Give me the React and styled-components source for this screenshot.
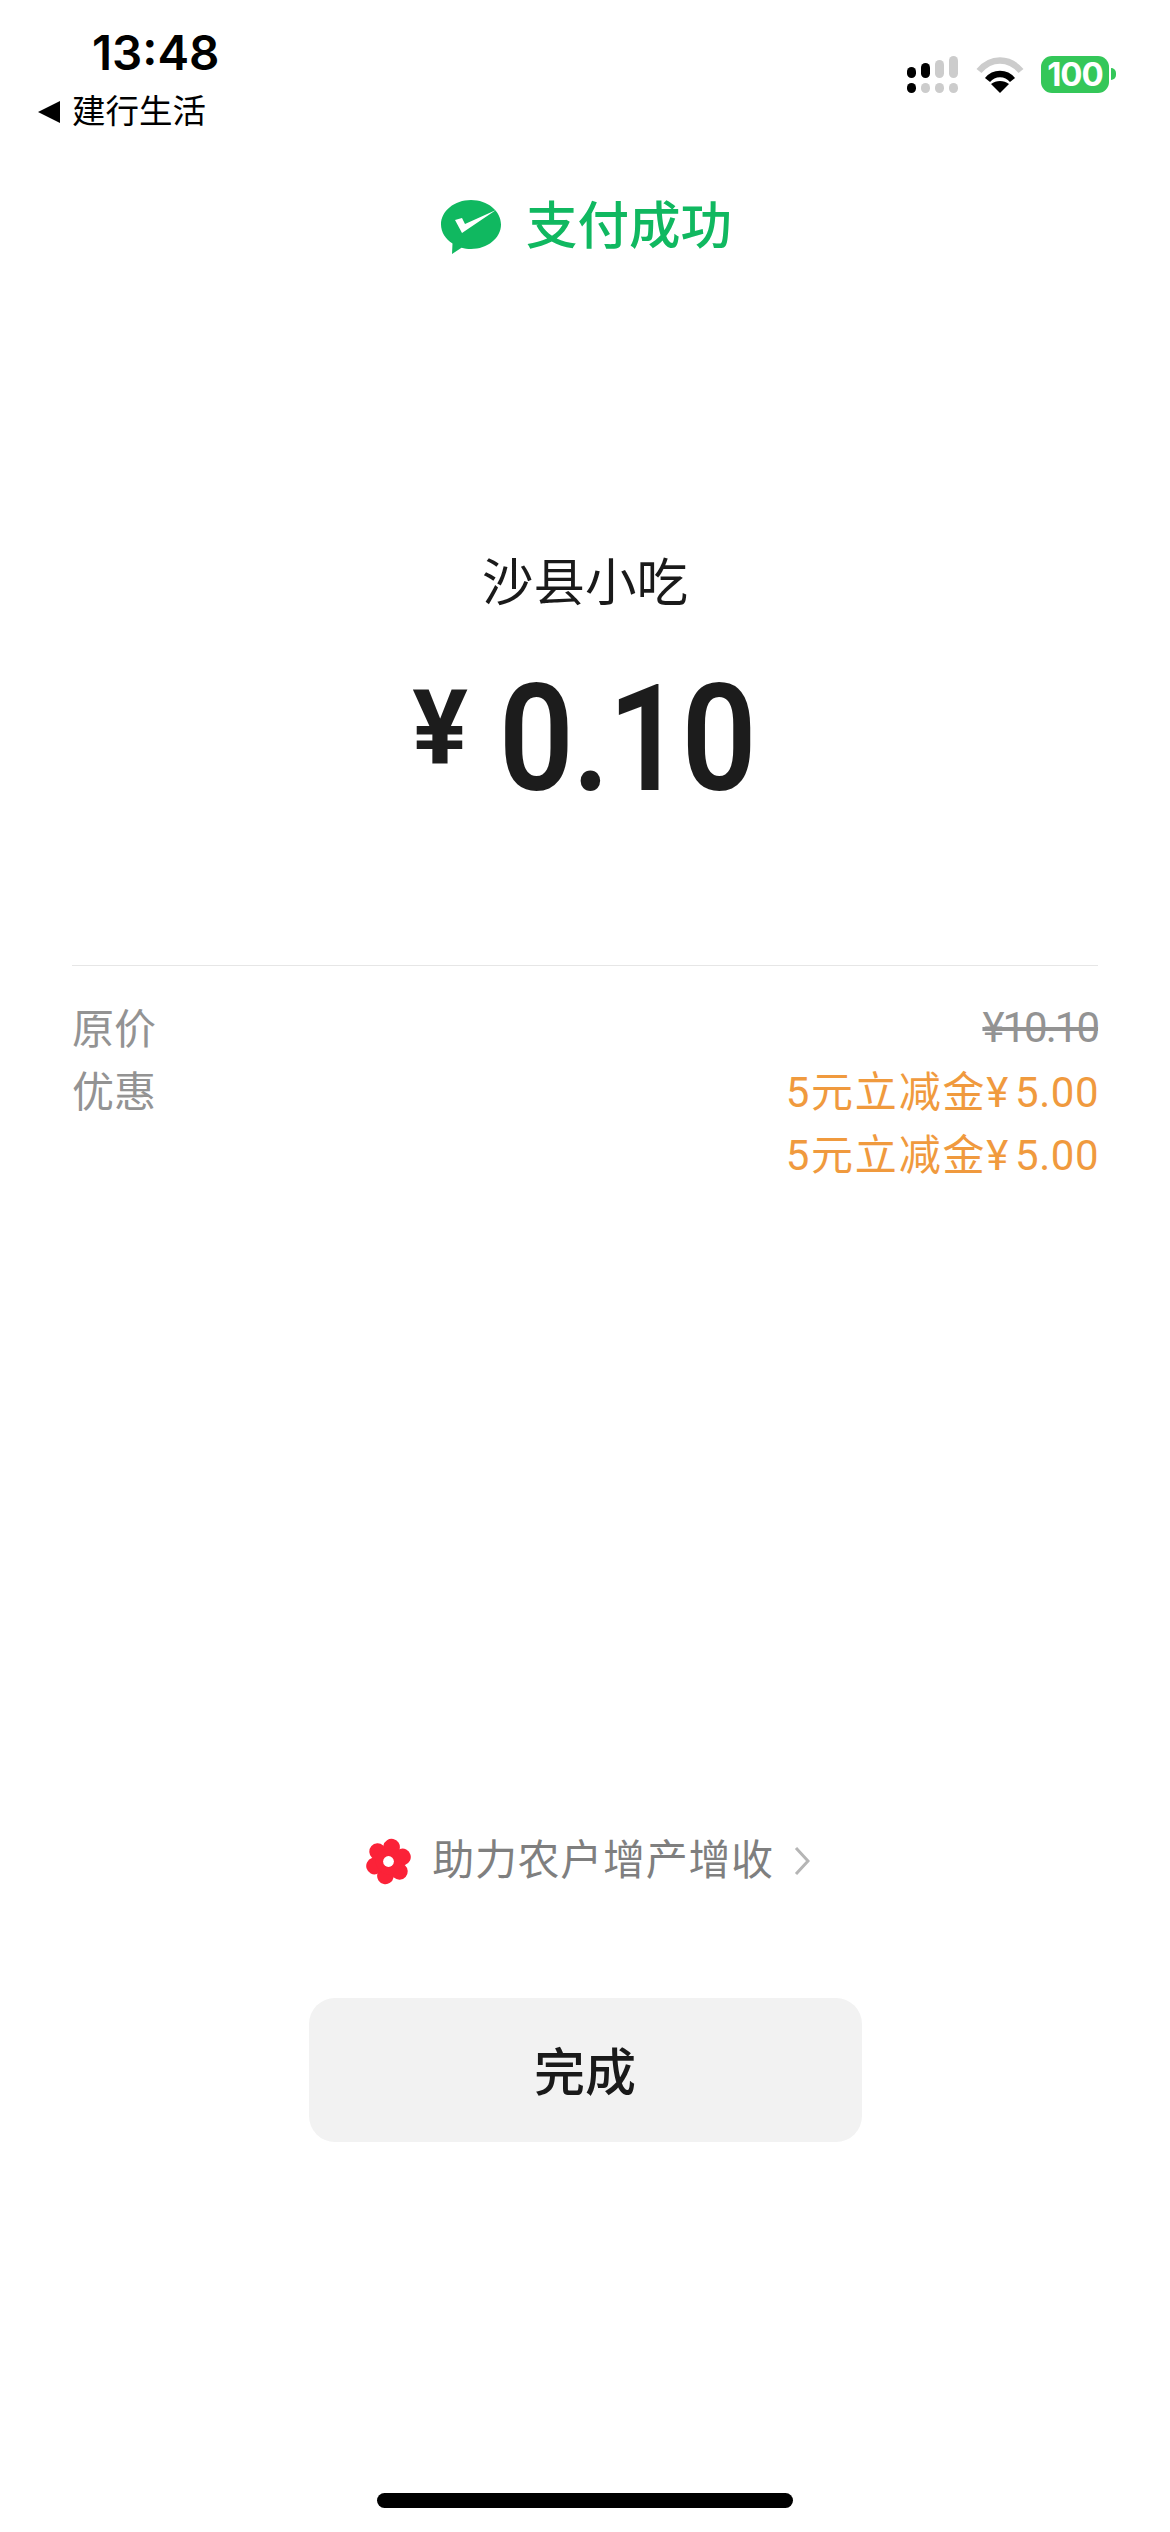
import React from "react"
import styled, { createGlobalStyle } from "styled-components"

const GlobalStyle = createGlobalStyle`
  html, body {
    margin: 0;
    padding: 0;
    background: #fff;
  }
`

const cjk = `Roboto, "Noto Sans CJK SC", sans-serif`

const Page = styled.div`
  width: 1170px;
  height: 2532px;
  display: flex;
  flex-direction: column;
  align-items: center;
  background: #fff;
  font-family: ${cjk};
  overflow: hidden;
`

const StatusBar = styled.div`
  width: 100%;
  height: 132px;
  box-sizing: border-box;
  padding: 25px 54px 0 38px;
  display: flex;
  justify-content: space-between;
  align-items: flex-start;
`

const StatusLeft = styled.div`
  display: flex;
  flex-direction: column;
  gap: 11px;
`

const Time = styled.div`
  margin-left: 54px;
  font-family: Inter, sans-serif;
  font-size: 47.5px;
  line-height: 56px;
  font-weight: 600;
  color: #000;
`

const Carrier = styled.div`
  display: flex;
  align-items: center;
  gap: 12px;
  font-size: 33.500px;
  line-height: 40px;
  color: #000;
`

const BackArrow = styled.span`
  width: 0;
  height: 0;
  border-style: solid;
  border-width: 11px 22px 11px 0;
  border-color: transparent #000 transparent transparent;
`

const StatusRight = styled.div`
  display: flex;
  align-items: center;
  gap: 17px;
  margin-top: 30px;
`

const Battery = styled.div`
  display: flex;
  align-items: center;
  gap: 2px;
`

const BatteryBody = styled.div`
  width: 68px;
  height: 37px;
  border-radius: 11px;
  background: #34c759;
  color: #fff;
  font-family: Inter, sans-serif;
  font-size: 33px;
  font-weight: 700;
  line-height: 37px;
  text-align: center;
  letter-spacing: -1px;
`

const BatteryNub = styled.div`
  width: 5px;
  height: 12px;
  border-radius: 0 6px 6px 0;
  background: #34c759;
`

const TitleRow = styled.div`
  margin: 65px 0 0 3px;
  display: flex;
  align-items: center;
  gap: 25px;
  height: 60px;
`

const Title = styled.div`
  font-size: 51.500px;
  line-height: 60px;
  font-weight: 500;
  color: #10b860;
`

const Merchant = styled.div`
  margin-top: 297px;
  font-size: 51.500px;
  line-height: 60px;
  font-weight: 400;
  color: #1a1a1a;
`

const Amount = styled.div`
  margin: 46px 0 0 13px;
  height: 160px;
  display: flex;
  align-items: center;
  gap: 15px;
  color: #1c1c1c;
`

const Yen = styled.span`
  font-size: 104px;
  line-height: 160px;
  font-weight: 700;
  margin-top: -24px;
`

const Digits = styled.span`
  font-size: 148px;
  line-height: 160px;
  font-weight: 600;
  letter-spacing: -2px;
  transform: scaleX(0.89);
`

const Divider = styled.div`
  margin-top: 145px;
  width: 1026px;
  height: 1px;
  background: #e6e6e6;
`

const Details = styled.div`
  width: 1026px;
  margin-top: 28px;
  display: grid;
  grid-template-columns: auto 1fr;
  grid-auto-rows: 63px;
  align-items: center;
  font-size: 42px;
`

const Label = styled.div`
  color: #939393;
  grid-column: 1;
`

const Value = styled.div`
  grid-column: 2;
  text-align: right;
  letter-spacing: ${props => (props.$struck ? "-2px" : "1.8px")};
  margin-right: ${props => (props.$struck ? "0" : "-1px")};
  margin-top: ${props => (props.$struck ? "3px" : "-1px")};
  color: ${props => (props.$struck ? "#939393" : "#f09a3e")};
  text-decoration: ${props => (props.$struck ? "line-through" : "none")};
`

const Sign = styled.span`
  margin-right: 5px;
`

const Num = styled.span`
  letter-spacing: 0.5px;
`

const LinkRow = styled.div`
  margin: 648px 0 0 5px;
  height: 60px;
  display: flex;
  align-items: center;
  gap: 20px;
`

const LinkText = styled.div`
  font-size: 42px;
  line-height: 60px;
  letter-spacing: 0.7px;
  color: #7f7f7f;
`

const DoneButton = styled.button`
  margin-top: 107px;
  width: 553px;
  height: 144px;
  border: none;
  border-radius: 26px;
  background: #f2f2f2;
  color: #1a1a1a;
  font-family: ${cjk};
  font-size: 51px;
  font-weight: 500;
  padding: 0 0 2px;
`

const HomeIndicator = styled.div`
  margin-top: 351px;
  width: 416px;
  height: 15px;
  border-radius: 8px;
  background: #000;
`

const SignalIcon = () => (
  <svg width="52" height="38" viewBox="0 0 52 38">
    <rect x="0" y="12" width="9" height="11" rx="4.5" fill="#000" />
    <rect x="14" y="8" width="9" height="15" rx="4.5" fill="#000" />
    <rect x="28" y="5" width="9" height="18" rx="4.5" fill="#ccc" />
    <rect x="42" y="1" width="9" height="22" rx="4.5" fill="#ccc" />
    <rect x="0" y="28" width="9" height="10" rx="4.5" fill="#000" />
    <rect x="14" y="28" width="9" height="10" rx="4.5" fill="#ccc" />
    <rect x="28" y="28" width="9" height="10" rx="4.5" fill="#ccc" />
    <rect x="42" y="28" width="9" height="10" rx="4.5" fill="#ccc" />
  </svg>
)

const WifiIcon = () => (
  <svg width="48" height="37" viewBox="0 0 48 37">
    <path d="M3 15 C15 1 33 1 45 15" fill="none" stroke="#ccc" strokeWidth="6.5" />
    <path d="M11.5 24 C18 16 30 16 36.5 24" fill="none" stroke="#000" strokeWidth="6.5" />
    <path d="M24 37 L15 28 C20 24 28 24 33 28 Z" fill="#000" />
  </svg>
)

const PayIcon = () => (
  <svg width="60" height="54" viewBox="0 0 60 54">
    <path
      d="M30 0 C46.500 0 60 11 60 24.500 C60 38 46.500 49 30 49 C26.500 49 23.500 48.500 20.500 47.700 L11 54 L11.500 43.500 C4.500 39 0 32.200 0 24.500 C0 11 13.500 0 30 0 Z"
      fill="#10b860"
    />
    <path d="M14 20 L21 18 L24 24 L55 10 L21 33 Z" fill="#fff" />
  </svg>
)

const FlowerIcon = () => (
  <svg width="47" height="47" viewBox="-24 -24 48 48">
    {[0, 60, 120, 180, 240, 300].map(angle => (
      <circle key={angle} cx="0" cy="-15" r="8.500" fill="#fb2238" transform={`rotate(${angle + 12})`} />
    ))}
    <circle r="13" fill="#fb2238" />
    <circle r="5.500" fill="#fff" />
  </svg>
)

const ChevronIcon = () => (
  <svg width="16" height="30" viewBox="0 0 16 30">
    <path d="M2 2 L14 15 L2 28" fill="none" stroke="#b5b5b5" strokeWidth="3" />
  </svg>
)

export default function App() {
  return (
    <Page>
      <GlobalStyle />
      <StatusBar>
        <StatusLeft>
          <Time>13:48</Time>
          <Carrier>
            <BackArrow />
            建行生活
          </Carrier>
        </StatusLeft>
        <StatusRight>
          <SignalIcon />
          <WifiIcon />
          <Battery>
            <BatteryBody>100</BatteryBody>
            <BatteryNub />
          </Battery>
        </StatusRight>
      </StatusBar>
      <TitleRow>
        <PayIcon />
        <Title>支付成功</Title>
      </TitleRow>
      <Merchant>沙县小吃</Merchant>
      <Amount>
        <Yen>¥</Yen>
        <Digits>0.10</Digits>
      </Amount>
      <Divider />
      <Details>
        <Label>原价</Label>
        <Value $struck>¥10.10</Value>
        <Label>优惠</Label>
        <Value>5元立减金<Sign>¥</Sign><Num>5.00</Num></Value>
        <Value>5元立减金<Sign>¥</Sign><Num>5.00</Num></Value>
      </Details>
      <LinkRow>
        <FlowerIcon />
        <LinkText>助力农户增产增收</LinkText>
        <ChevronIcon />
      </LinkRow>
      <DoneButton>完成</DoneButton>
      <HomeIndicator />
    </Page>
  )
}
